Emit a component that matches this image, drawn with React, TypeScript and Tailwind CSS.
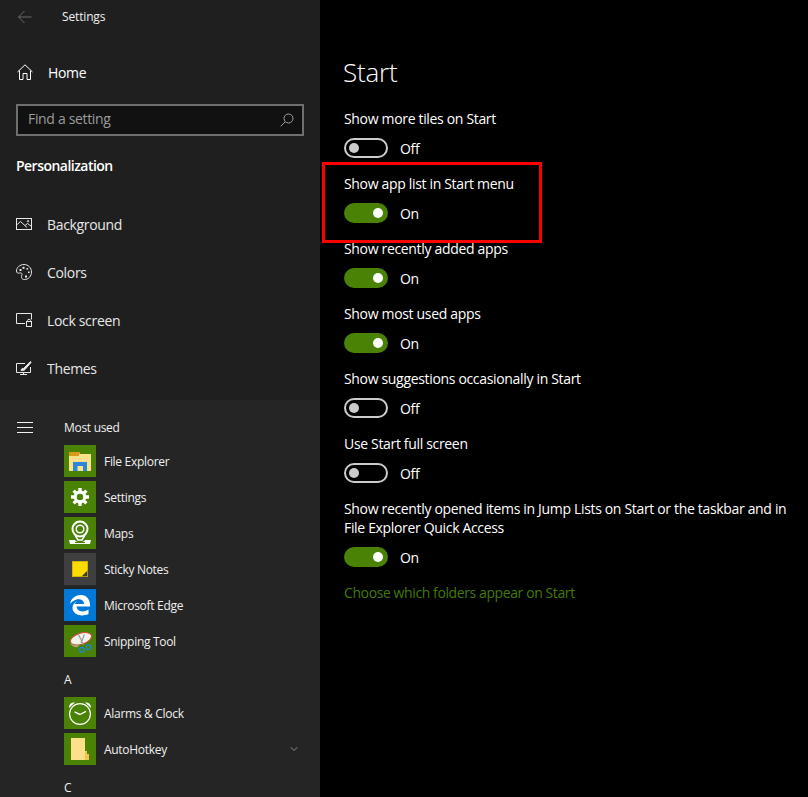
import { ChevronDown } from 'lucide-react'
import type { ReactNode } from 'react'

const font = "font-['Open_Sans','Noto_Sans',sans-serif]"

function BackIcon() {
  return (
    <svg width="16" height="14" viewBox="0 0 16 14" fill="none" stroke="#6b6b6b" strokeWidth="1">
      <path d="M1.5 7H14.5M7.5 1L1.5 7L7.5 13" />
    </svg>
  )
}

function HomeIcon() {
  return (
    <svg width="16" height="16" viewBox="0 0 16 16" fill="none" stroke="#fff" strokeWidth="1">
      <path d="M.5 8L8 .8L15.5 8M2.5 6.5V15.5H6V9.5H10V15.5H13.5V6.5" />
    </svg>
  )
}

function SearchIcon() {
  return (
    <svg width="14" height="14" viewBox="0 0 14 14" fill="none" stroke="#a0a0a0" strokeWidth="1">
      <circle cx="8.5" cy="5.5" r="4.5" />
      <path d="M5.3 8.7L.7 13.3" />
    </svg>
  )
}

function BackgroundIcon() {
  return (
    <svg width="16" height="12" viewBox="0 0 16 12" fill="none" stroke="#e8e8e8" strokeWidth="1">
      <rect x=".5" y=".5" width="15" height="11" />
      <path d="M.5 7L4.5 3.5L11 9.5M9 7.5L11.5 5.5L15.5 8.5" />
      <circle cx="12" cy="3.2" r=".7" />
    </svg>
  )
}

function ColorsIcon() {
  return (
    <svg width="16" height="16" viewBox="0 0 16 16" fill="none" stroke="#e8e8e8" strokeWidth="1">
      <path d="M8 .5C3.8.5.5 3.5.5 7C.5 9 2 9.5 3.5 9C5 8.6 6 9.2 6 10.5C6 11.5 5.2 12 5.5 13.5C5.8 15 7 15.5 8.5 15.5C12.5 15.5 15.5 12 15.5 8C15.5 3.8 12.2.5 8 .5Z" />
      <g fill="#e8e8e8" stroke="none">
        <rect x="3.5" y="5" width="2" height="2" />
        <rect x="6.5" y="2.8" width="2" height="2" />
        <rect x="10.5" y="4" width="1.6" height="1.6" />
        <rect x="12" y="7.5" width="1.6" height="1.6" />
        <rect x="9" y="11.5" width="2" height="2" />
      </g>
    </svg>
  )
}

function LockIcon() {
  return (
    <svg width="16" height="14" viewBox="0 0 16 14" fill="none" stroke="#e8e8e8" strokeWidth="1">
      <path d="M9 10.5H.5V.5H15.5V6.5" />
      <rect x="10.5" y="8.5" width="5" height="5" />
      <path d="M11.5 8.5V7.5C11.5 5.8 14.5 5.8 14.5 7.5V8.5" />
    </svg>
  )
}

function ThemesIcon() {
  return (
    <svg width="16" height="14" viewBox="0 0 16 14" fill="none" stroke="#e8e8e8" strokeWidth="1">
      <path d="M9 2.5H.5V11.5H14.5V6M7.5 11.5V13.5M4 13.5H11" />
      <path d="M5 9.5C5.5 7.5 6.5 7 7.5 7.5L14.5.5L15 1.5L9 8.5C8.5 9.5 6.5 9.8 5 9.5Z" fill="#e8e8e8" />
    </svg>
  )
}

function Tile({ bg = 'bg-[#498205]', children }: { bg?: string; children: ReactNode }) {
  return <div className={`flex h-8 w-8 shrink-0 items-center justify-center ${bg}`}>{children}</div>
}

const explorerIcon = (
  <svg width="22" height="19" viewBox="0 0 22 19">
    <path d="M0 0H11V5H0Z" fill="#d99a1c" />
    <path d="M0 2H22V19H0Z" fill="#ffe08a" />
    <path d="M0 0H11V2H10V4H0Z" fill="#d99a1c" />
    <path d="M4 10H18V19H14V14H8.5V19H4Z" fill="#2b88d8" />
  </svg>
)

const gearIcon = (
  <svg width="18" height="18" viewBox="0 0 18 18" fill="none" stroke="#fff">
    <circle cx="9" cy="9" r="4.8" strokeWidth="3.2" />
    <path
      d="M9 0V4M9 14V18M0 9H4M14 9H18M2.6 2.6L5.4 5.4M12.6 12.6L15.4 15.4M15.4 2.6L12.6 5.4M5.4 12.6L2.6 15.4"
      strokeWidth="3.4"
    />
  </svg>
)

const mapsIcon = (
  <svg width="24" height="26" viewBox="0 0 24 26" fill="none" stroke="#fff">
    <circle cx="12" cy="9" r="7.5" strokeWidth="2" />
    <circle cx="12" cy="9" r="3.8" strokeWidth="1.5" />
    <path d="M7 15L10 20H14L17 15" strokeWidth="1.5" />
    <path d="M1 20H7C8 23 16 23 17 20H23L22 24H2Z" fill="#fff" stroke="none" />
    <path d="M7 22.5H17" stroke="#498205" strokeWidth="1" />
  </svg>
)

const stickyIcon = (
  <svg width="16" height="16" viewBox="0 0 16 16">
    <path d="M0 0H16V9L9 16H0Z" fill="#ffdc00" />
    <path d="M16 9V16H9Z" fill="#3a3a3a" />
    <path d="M9 16L16 9" stroke="#b59b00" strokeWidth=".8" />
    <rect x=".4" y=".4" width="15.2" height="15.2" fill="none" stroke="#c9ad00" strokeWidth=".8" />
  </svg>
)

const edgeIcon = (
  <svg width="22" height="22" viewBox="0 0 22 22">
    <path
      d="M1 10C2 4 7 1 12 1C18 1 21.5 6 21 12.5H7.5C8 17.5 14.5 19 19.5 15.5V20C13.5 23 4.5 21.5 3.5 14.5C3.2 12 5 8.5 8 7C6 9 5.5 10 5.5 10H15C15 6 11 4.5 7.5 5.5C5 6.3 2.5 8 1 10Z"
      fill="#fff"
    />
  </svg>
)

const snipIcon = (
  <svg width="24" height="22" viewBox="0 0 28 26" fill="none" className="mt-[4px] ml-[1px]">
    <ellipse cx="14" cy="8" rx="13" ry="6.5" transform="rotate(-18 14 8)" fill="#f2f2ea" stroke="#d8483a" strokeWidth="1.2" />
    <path d="M1.5 12C3 16 9 15.5 13 14L10 18C5 18 1.5 16 1.5 12Z" fill="#a8a878" />
    <path d="M11 3L17 15M18 3L14 13" stroke="#9a9a9a" strokeWidth="1.4" />
    <circle cx="15" cy="21" r="2.8" stroke="#1c86d8" strokeWidth="1.6" />
    <circle cx="23" cy="18" r="2.8" stroke="#1c86d8" strokeWidth="1.6" />
  </svg>
)

const alarmIcon = (
  <svg width="24" height="24" viewBox="0 0 24 24" fill="none" stroke="#fff">
    <circle cx="12" cy="13" r="10.4" strokeWidth="1.2" />
    <path d="M1 7C1 2.5 4 1 7 1.5ZM23 7C23 2.5 20 1 17 1.5Z" fill="#fff" stroke="none" />
    <path d="M12 13.5L18 10.3M12 13.5L6.5 10.8" strokeWidth="1.4" />
  </svg>
)

const folderIcon = (
  <svg width="18" height="22" viewBox="0 0 18 22">
    <path d="M0 0H14V16H18V22H0Z" fill="#ffe08a" />
    <path d="M14 13L16 13V16H18V22H14Z" fill="#f5c44e" />
  </svg>
)

const mostUsed = [
  { name: 'File Explorer', icon: explorerIcon },
  { name: 'Settings', icon: gearIcon },
  { name: 'Maps', icon: mapsIcon },
  { name: 'Sticky Notes', icon: stickyIcon, bg: 'bg-[#3f3f3f]' },
  { name: 'Microsoft Edge', icon: edgeIcon, bg: 'bg-[#0078d7]' },
  { name: 'Snipping Tool', icon: snipIcon }
]

function AppRow({ name, icon, bg, expand }: { name: string; icon: ReactNode; bg?: string; expand?: boolean }) {
  return (
    <div className="flex h-9 shrink-0 items-center gap-2 pr-[20px]">
      <Tile bg={bg}>{icon}</Tile>
      <span className="flex-1 pt-[2px] text-[12px] tracking-[-0.3px] text-[#f0f0f0]">{name}</span>
      {expand && <ChevronDown size={12} strokeWidth={1.2} className="text-[#d0d0d0]" />}
    </div>
  )
}

function NavItem({ icon, label }: { icon: ReactNode; label: string }) {
  return (
    <div className="flex h-12 items-center">
      <span className="flex w-[47px] shrink-0 pl-4">{icon}</span>
      <span className="text-[14px] tracking-[-0.33px] text-[#e8e8e8]">{label}</span>
    </div>
  )
}

function Setting({ label, on }: { label: ReactNode; on: boolean }) {
  return (
    <div className="flex flex-col pt-[8px] pb-[7px]">
      <div className="text-[14px] leading-[19px] tracking-[-0.33px] whitespace-nowrap text-white">{label}</div>
      <div className="mt-[9px] flex h-[22px] items-center gap-3">
        {on ? (
          <div className="flex h-5 w-11 items-center justify-end rounded-full bg-[#498205] pr-[5px]">
            <div className="h-2.5 w-2.5 rounded-full bg-white" />
          </div>
        ) : (
          <div className="flex h-5 w-11 items-center rounded-full border-2 border-[#cccccc] pl-[3px]">
            <div className="h-2.5 w-2.5 rounded-full bg-[#cccccc]" />
          </div>
        )}
        <span className="text-[14px] tracking-[-0.33px] text-white">{on ? 'On' : 'Off'}</span>
      </div>
    </div>
  )
}

export default function App() {
  return (
    <div className={`flex h-[797px] w-[808px] overflow-hidden bg-black ${font}`}>
      <aside className="flex w-[320px] shrink-0 flex-col">
        <div className="h-[400px] shrink-0 bg-[#1f1f1f]">
          <div className="flex h-8 items-center pt-[2px] pl-[17px]">
            <BackIcon />
            <span className="ml-[29px] text-[12px] tracking-[-0.15px] text-[#f0f0f0]">Settings</span>
          </div>
          <div className="mt-[16px] flex h-12 items-center">
            <span className="flex w-12 pl-[17px]">
              <HomeIcon />
            </span>
            <span className="text-[14px] tracking-[-0.33px] text-white">Home</span>
          </div>
          <div className="mx-4 mt-[8px] flex h-8 items-center justify-between border-2 border-[#6f6f6f] bg-[#111111] pr-[8px] pl-[10px]">
            <span className="pb-[3px] text-[14px] tracking-[-0.33px] text-[#9c9c9c]">Find a setting</span>
            <SearchIcon />
          </div>
          <div className="mt-[20px] pl-4 text-[14px] leading-[19px] font-semibold tracking-[-0.53px] text-white">
            Personalization
          </div>
          <div className="mt-[25px]">
            <NavItem icon={<BackgroundIcon />} label="Background" />
            <NavItem icon={<ColorsIcon />} label="Colors" />
            <NavItem icon={<LockIcon />} label="Lock screen" />
            <NavItem icon={<ThemesIcon />} label="Themes" />
          </div>
        </div>
        <div className="flex min-h-0 flex-1 overflow-hidden bg-[#252525]">
          <div className="w-[64px] shrink-0 pt-[22px] pl-[17px]">
            <div className="flex w-4 flex-col gap-[4px]">
              <div className="h-px bg-[#f0f0f0]" />
              <div className="h-px bg-[#f0f0f0]" />
              <div className="h-px bg-[#f0f0f0]" />
            </div>
          </div>
          <div className="flex-1">
            <div className="flex h-[43px] items-center pt-[12px] text-[12px] tracking-[-0.3px] text-[#f0f0f0]">
              Most used
            </div>
            {mostUsed.map((app) => (
              <AppRow key={app.name} {...app} />
            ))}
            <div className="flex h-9 items-center pt-[6px] text-[12px] text-[#f0f0f0]">A</div>
            <AppRow name="Alarms &amp; Clock" icon={alarmIcon} />
            <AppRow name="AutoHotkey" icon={folderIcon} expand />
            <div className="flex h-9 items-center pt-[6px] text-[12px] text-[#f0f0f0]">C</div>
          </div>
        </div>
      </aside>

      <main className="relative flex-1 pl-6">
        <h1 className="-ml-px pt-[52px] pb-[9px] text-[26px] leading-[40px] font-light tracking-[-0.2px] text-white">
          Start
        </h1>
        <Setting label="Show more tiles on Start" on={false} />
        <Setting label="Show app list in Start menu" on />
        <Setting label="Show recently added apps" on />
        <Setting label="Show most used apps" on />
        <Setting label="Show suggestions occasionally in Start" on={false} />
        <Setting label="Use Start full screen" on={false} />
        <Setting
          label={
            <>
              Show recently opened items in Jump Lists on Start or the taskbar and in
              <br />
              File Explorer Quick Access
            </>
          }
          on
        />
        <div className="mt-[7px] text-[14px] tracking-[-0.4px] text-[#427a05]">
          Choose which folders appear on Start
        </div>
        <div className="absolute top-[162px] left-[2px] h-[81px] w-[220px] border-[3px] border-[#ff0000]" />
      </main>
    </div>
  )
}
